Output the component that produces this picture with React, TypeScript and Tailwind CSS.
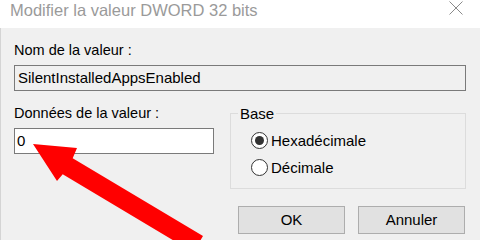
const Radio = ({ label, checked }: { label: string; checked?: boolean }) => {
  return (
    <div className="flex items-center gap-[3px]">
      <div className="flex h-[17px] w-[17px] items-center justify-center rounded-full border border-[#333333] bg-white">
        {checked && <div className="h-[9px] w-[9px] rounded-full bg-[#333333]" />}
      </div>
      <span className="text-[15px] leading-[17px]">{label}</span>
    </div>
  );
};

export default function App() {
  return (
    <div className="relative h-[240px] w-[480px] overflow-hidden bg-[#f0f0f0] font-['Liberation_Sans',Arial,sans-serif] text-black">
      <div className="flex h-[28px] items-start justify-between bg-white">
        <span className="pl-[10px] pt-[1px] text-[16.5px] leading-[18px] text-[#9a9a9a]">
          Modifier la valeur DWORD 32 bits
        </span>
        <svg width="14" height="14" viewBox="0 0 14 14" className="mr-[17px] mt-[1px]">
          <path d="M0.5 0.5 L13.5 13.5 M13.5 0.5 L0.5 13.5" stroke="#8a8a8a" strokeWidth="1" fill="none" />
        </svg>
      </div>

      <div className="h-[212px] border-l border-[#d4d4d4] pl-[13px] pr-[14px] pt-[14px]">
        <div className="text-[14.5px] leading-[17px]">Nom de la valeur :</div>
        <div className="mt-[6px] flex h-[26px] items-center border border-[#7a7a7a] bg-[#f0f0f0] pl-[3px] text-[15px]">
          SilentInstalledAppsEnabled
        </div>

        <div className="mt-[14px] flex">
          <div className="w-[216px]">
            <div className="text-[14.5px] leading-[17px]">Données de la valeur :</div>
            <div className="mt-[6px] flex h-[26px] w-[200px] items-center border border-[#7a7a7a] bg-white pl-[2px] text-[15px]">
              0
            </div>
          </div>
          <fieldset className="h-[84px] w-[236px] border border-[#dcdcdc] pl-[7px]">
            <legend className="px-[2px] text-[15px] leading-[17px]">Base</legend>
            <div className="ml-[13px] mt-[10px] flex flex-col gap-[10px]">
              <Radio label="Hexadécimale" checked />
              <Radio label="Décimale" />
            </div>
          </fieldset>
        </div>

        <div className="mt-[17px] flex justify-end gap-[13px] pr-[1px]">
          <button className="h-[28px] w-[107px] border border-[#adadad] bg-[#e1e1e1] text-[15px]">OK</button>
          <button className="h-[28px] w-[107px] border border-[#adadad] bg-[#e1e1e1] text-[15px]">Annuler</button>
        </div>
      </div>

      <svg className="pointer-events-none absolute left-0 top-0" width="480" height="240" viewBox="0 0 480 240">
        <polygon
          points="33,144 77,148 72.7,158.3 203,236 193.3,252.3 62.7,174.3 57,181"
          fill="#ff0000"
        />
      </svg>
    </div>
  );
}
